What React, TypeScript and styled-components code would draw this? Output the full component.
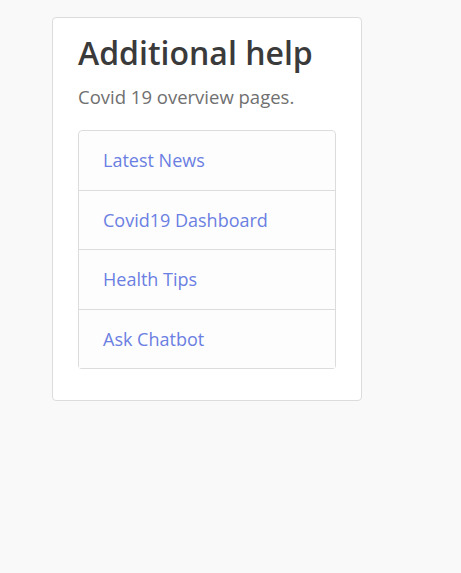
import React from "react";
import styled, { createGlobalStyle } from "styled-components";

const GlobalStyle = createGlobalStyle`
  html, body {
    margin: 0;
    padding: 0;
    background: #f9f9f9;
    font-family: "Open Sans", "Noto Sans", sans-serif;
  }
`;

const Page = styled.div`
  padding: 17px 0 0 52px;
`;

const Card = styled.div`
  width: 310px;
  box-sizing: border-box;
  background: #fff;
  border: 1px solid #dcdcdc;
  border-radius: 4px;
  padding: 13px 25px 31px 25px;
`;

const Title = styled.h2`
  margin: 0;
  font-size: 32px;
  font-weight: 600;
  line-height: 44px;
  color: #3a3a3a;
`;

const Subtitle = styled.p`
  margin: 9px 0 20px;
  font-size: 18.5px;
  line-height: 26px;
  color: #707070;
`;

const ListGroup = styled.div`
  display: flex;
  flex-direction: column;
  border-radius: 4px;
  overflow: hidden;
`;

const ListItem = styled.a`
  display: block;
  height: 60.5px;
  box-sizing: border-box;
  padding: 0 24px;
  line-height: 58px;
  font-size: 18px;
  color: #6b7fe2;
  text-decoration: none;
  background: #fdfdfd;
  border: 1px solid #dcdcdc;
  margin-top: -1px;

  &:first-child {
    margin-top: 0;
    border-top-left-radius: 4px;
    border-top-right-radius: 4px;
  }
`;

const links = ["Latest News", "Covid19 Dashboard", "Health Tips", "Ask Chatbot"];

export default function App() {
  return (
    <>
      <GlobalStyle />
      <Page>
        <Card>
          <Title>Additional help</Title>
          <Subtitle>Covid 19 overview pages.</Subtitle>
          <ListGroup>
            {links.map((label) => (
              <ListItem key={label} href="#">
                {label}
              </ListItem>
            ))}
          </ListGroup>
        </Card>
      </Page>
    </>
  );
}
